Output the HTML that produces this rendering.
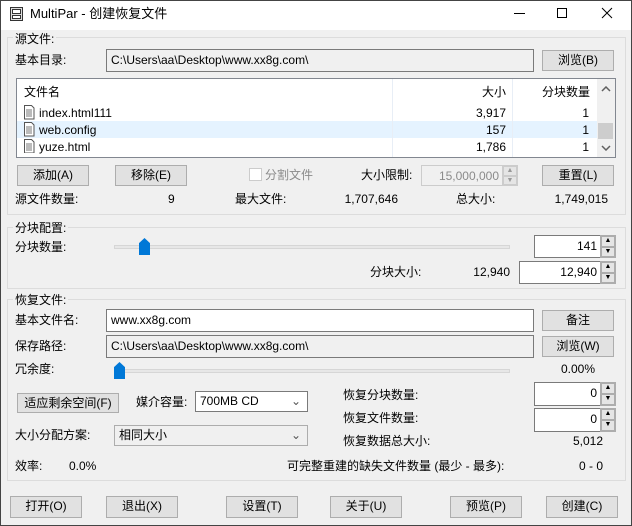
<!DOCTYPE html>
<html><head><meta charset="utf-8"><style>
*{box-sizing:border-box;margin:0;padding:0}
body{width:632px;height:526px;overflow:hidden;background:#f0f0f0;font-family:"Liberation Sans","Noto Sans CJK SC",sans-serif;font-size:12px;color:#000;position:relative}
.a{position:absolute;white-space:nowrap;line-height:14px}
.r{text-align:right}
.btn{position:absolute;background:#e1e1e1;border:1px solid #adadad;text-align:center;line-height:18px}
.box{position:absolute;border:1px solid #7a7a7a;background:#fff;padding-left:4px;line-height:20px}
.gray{background:#f0f0f0}
.grp{position:absolute;border:1px solid #dcdcdc}
.lbl{position:absolute;background:#f0f0f0;padding:0 2px;line-height:14px}
.spin{position:absolute;width:16px;border:1px solid #adadad;background:#f0f0f0}
.spin div{height:50%;border:1px solid #adadad;background:#e5e5e5;font-size:7px;text-align:center;line-height:8px}
.track{position:absolute;height:4px;background:#e7e7e7;border:1px solid #d6d6d6}
.thumb{position:absolute;width:11px;height:17px;background:#0078d7;clip-path:polygon(0 30%,50% 0,100% 30%,100% 100%,0 100%)}
</style></head><body>
<div style="position:absolute;left:0;top:0;width:632px;height:30px;background:#fff"></div>
<div style="position:absolute;left:0;top:0;width:632px;height:526px;border:1px solid #444"></div>
<svg class="a" style="left:9px;top:6px" width="16" height="16"><rect x="1.5" y="1.5" width="12" height="13" fill="#ddd" stroke="#333"/><rect x="3.5" y="3.5" width="8" height="4" fill="#fff" stroke="#333"/><rect x="3.5" y="9.5" width="8" height="3" fill="#fff" stroke="#333"/></svg>
<div class="a" style="left:30px;top:6px;font-size:13px;line-height:16px">MultiPar - 创建恢复文件</div>
<div class="a" style="left:514px;top:13px;width:11px;height:1px;background:#000"></div>
<div class="a" style="left:557px;top:8px;width:10px;height:10px;border:1px solid #000"></div>
<svg class="a" style="left:601px;top:7px" width="12" height="12"><path d="M1 1L11 11M11 1L1 11" stroke="#000" stroke-width="1"/></svg>

<div class="grp" style="left:7px;top:37px;width:619px;height:178px"></div>
<div class="lbl" style="left:13px;top:32px">源文件:</div>
<div class="a" style="left:15px;top:53px">基本目录:</div>
<div class="box gray" style="left:106px;top:49px;width:428px;height:23px">C:\Users\aa\Desktop\www.xx8g.com\</div>
<div class="btn" style="left:542px;top:50px;width:72px;height:21px">浏览(B)</div>
<div style="position:absolute;left:16px;top:78px;width:600px;height:80px;border:1px solid #828790;background:#fff"></div>
<div class="a" style="left:17px;top:121px;width:580px;height:17px;background:#e5f3ff"></div>
<div class="a" style="left:392px;top:79px;width:1px;height:78px;background:#e8eef6"></div>
<div class="a" style="left:512px;top:79px;width:1px;height:78px;background:#e8eef6"></div>
<div class="a" style="left:24px;top:85px">文件名</div>
<div class="a r" style="left:440px;top:85px;width:66px">大小</div>
<div class="a r" style="left:520px;top:85px;width:70px">分块数量</div>
<svg class="a" style="left:23px;top:105px" width="12" height="48"><g fill="#fff" stroke="#555"><path d="M1.5 .5h7l2.5 2.5v11h-9.5z"/><path d="M1.5 17.5h7l2.5 2.5v11h-9.5z"/><path d="M1.5 34.5h7l2.5 2.5v11h-9.5z"/></g><g stroke="#777"><path d="M3 5h6M3 7h6M3 9h6M3 11h6M3 22h6M3 24h6M3 26h6M3 28h6M3 39h6M3 41h6M3 43h6M3 45h6"/></g></svg>
<div class="a" style="left:39px;top:106px">index.html111</div>
<div class="a" style="left:39px;top:123px">web.config</div>
<div class="a" style="left:39px;top:140px">yuze.html</div>
<div class="a r" style="left:420px;top:106px;width:86px">3,917</div>
<div class="a r" style="left:420px;top:123px;width:86px">157</div>
<div class="a r" style="left:420px;top:140px;width:86px">1,786</div>
<div class="a r" style="left:540px;top:106px;width:49px">1</div>
<div class="a r" style="left:540px;top:123px;width:49px">1</div>
<div class="a r" style="left:540px;top:140px;width:49px">1</div>
<div class="a" style="left:597px;top:79px;width:18px;height:78px;background:#f0f0f0"></div>
<div class="a" style="left:598px;top:123px;width:15px;height:16px;background:#cdcdcd"></div>
<svg class="a" style="left:601px;top:86px" width="10" height="6"><path d="M1 5L5 1L9 5" stroke="#606060" stroke-width="1.5" fill="none"/></svg>
<svg class="a" style="left:601px;top:145px" width="10" height="6"><path d="M1 1L5 5L9 1" stroke="#606060" stroke-width="1.5" fill="none"/></svg>

<div class="btn" style="left:17px;top:165px;width:72px;height:21px">添加(A)</div>
<div class="btn" style="left:115px;top:165px;width:72px;height:21px">移除(E)</div>
<div class="a" style="left:249px;top:168px;width:13px;height:13px;border:1px solid #ccc;background:#fff"></div>
<div class="a" style="left:265px;top:168px;color:#8a8a8a">分割文件</div>
<div class="a" style="left:361px;top:168px">大小限制:</div>
<div class="box gray r" style="left:421px;top:165px;width:82px;height:21px;border-color:#ccc;color:#8a8a8a;padding-right:3px">15,000,000</div>
<div class="spin" style="left:502px;top:165px;height:21px;border-color:#ccc"><div style="border-color:#ccc;color:#999">▲</div><div style="border-color:#ccc;color:#999">▼</div></div>
<div class="btn" style="left:542px;top:165px;width:72px;height:21px">重置(L)</div>
<div class="a" style="left:15px;top:192px">源文件数量:</div>
<div class="a" style="left:168px;top:192px">9</div>
<div class="a" style="left:235px;top:192px">最大文件:</div>
<div class="a r" style="left:320px;top:192px;width:78px">1,707,646</div>
<div class="a" style="left:456px;top:192px">总大小:</div>
<div class="a r" style="left:530px;top:192px;width:78px">1,749,015</div>

<div class="grp" style="left:7px;top:227px;width:619px;height:62px"></div>
<div class="lbl" style="left:13px;top:221px">分块配置:</div>
<div class="a" style="left:15px;top:240px">分块数量:</div>
<div class="track" style="left:114px;top:245px;width:396px"></div>
<div class="thumb" style="left:139px;top:238px"></div>
<div class="box r" style="left:534px;top:235px;width:67px;height:23px;padding-right:3px">141</div>
<div class="spin" style="left:600px;top:235px;height:23px"><div>▲</div><div>▼</div></div>
<div class="a" style="left:370px;top:265px">分块大小:</div>
<div class="a r" style="left:440px;top:265px;width:70px">12,940</div>
<div class="box r" style="left:519px;top:261px;width:82px;height:23px;padding-right:3px">12,940</div>
<div class="spin" style="left:600px;top:261px;height:23px"><div>▲</div><div>▼</div></div>

<div class="grp" style="left:7px;top:299px;width:619px;height:182px"></div>
<div class="lbl" style="left:13px;top:293px">恢复文件:</div>
<div class="a" style="left:15px;top:313px">基本文件名:</div>
<div class="box" style="left:106px;top:309px;width:428px;height:23px">www.xx8g.com</div>
<div class="btn" style="left:542px;top:310px;width:72px;height:21px">备注</div>
<div class="a" style="left:15px;top:339px">保存路径:</div>
<div class="box gray" style="left:106px;top:335px;width:428px;height:23px">C:\Users\aa\Desktop\www.xx8g.com\</div>
<div class="btn" style="left:542px;top:336px;width:72px;height:21px">浏览(W)</div>
<div class="a" style="left:15px;top:362px">冗余度:</div>
<div class="track" style="left:114px;top:369px;width:396px"></div>
<div class="thumb" style="left:114px;top:362px"></div>
<div class="a r" style="left:540px;top:362px;width:55px">0.00%</div>
<div class="btn" style="left:17px;top:393px;width:102px;height:20px">适应剩余空间(F)</div>
<div class="a" style="left:136px;top:395px">媒介容量:</div>
<div class="box" style="left:195px;top:391px;width:113px;height:21px;line-height:19px">700MB CD<span style="position:absolute;right:6px;color:#555">&#8964;</span></div>
<div class="a" style="left:343px;top:388px">恢复分块数量:</div>
<div class="box r" style="left:534px;top:382px;width:67px;height:24px;padding-right:3px">0</div>
<div class="spin" style="left:600px;top:382px;height:24px"><div>▲</div><div>▼</div></div>
<div class="a" style="left:343px;top:411px">恢复文件数量:</div>
<div class="box r" style="left:534px;top:408px;width:67px;height:24px;padding-right:3px">0</div>
<div class="spin" style="left:600px;top:408px;height:24px"><div>▲</div><div>▼</div></div>
<div class="a" style="left:15px;top:428px">大小分配方案:</div>
<div class="box gray" style="left:114px;top:425px;width:194px;height:21px;line-height:19px;border-color:#adadad">相同大小<span style="position:absolute;right:6px;color:#555">&#8964;</span></div>
<div class="a" style="left:343px;top:434px">恢复数据总大小:</div>
<div class="a r" style="left:540px;top:434px;width:63px">5,012</div>
<div class="a" style="left:15px;top:459px">效率:</div>
<div class="a" style="left:69px;top:459px">0.0%</div>
<div class="a" style="left:287px;top:459px">可完整重建的缺失文件数量 (最少 - 最多):</div>
<div class="a r" style="left:560px;top:459px;width:43px">0 - 0</div>

<div class="btn" style="left:10px;top:496px;width:72px;height:22px">打开(O)</div>
<div class="btn" style="left:106px;top:496px;width:72px;height:22px">退出(X)</div>
<div class="btn" style="left:226px;top:496px;width:72px;height:22px">设置(T)</div>
<div class="btn" style="left:330px;top:496px;width:72px;height:22px">关于(U)</div>
<div class="btn" style="left:450px;top:496px;width:72px;height:22px">预览(P)</div>
<div class="btn" style="left:546px;top:496px;width:72px;height:22px">创建(C)</div>
</body></html>
